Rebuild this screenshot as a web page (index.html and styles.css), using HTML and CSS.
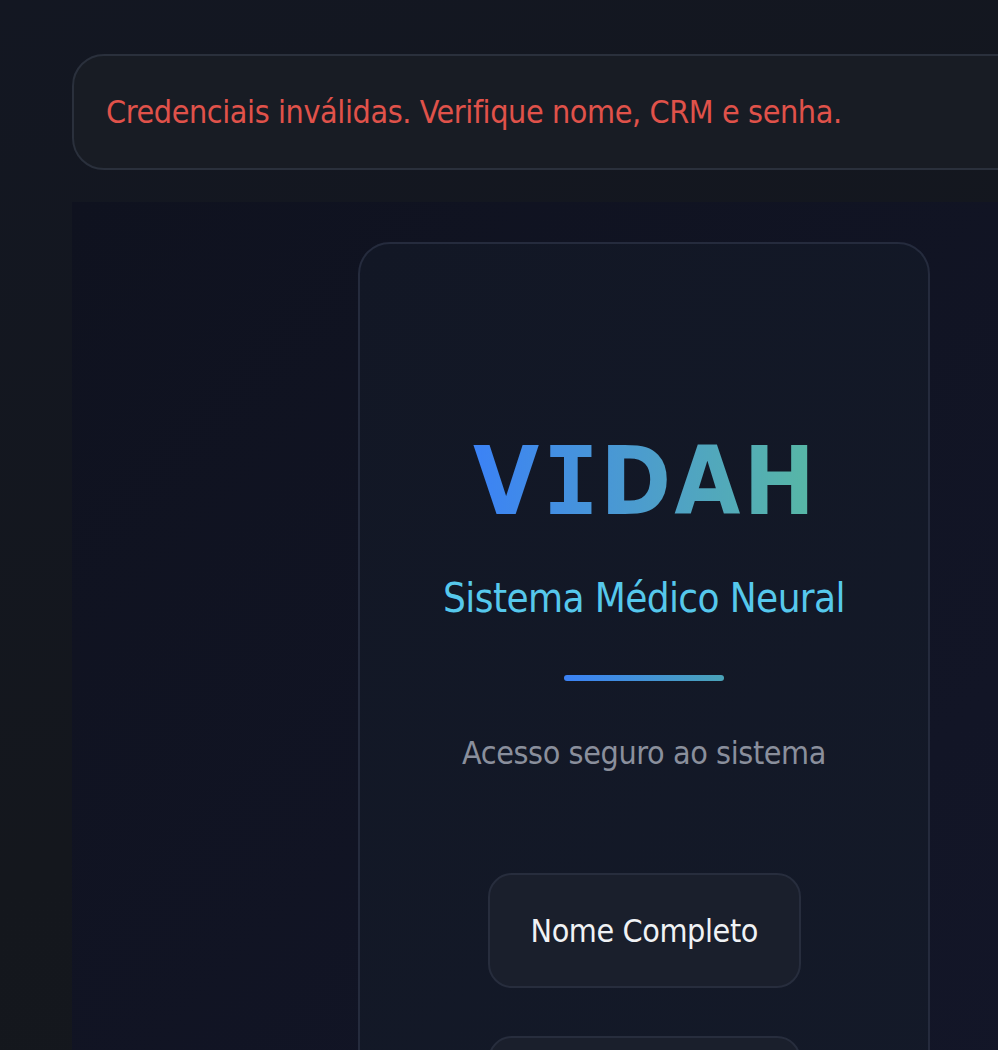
FILE: index.html
```html
<!DOCTYPE html>
<html lang="pt-BR">
<head>
<meta charset="utf-8">
<title>VIDAH — Acesso</title>
<link rel="stylesheet" href="styles.css">
</head>
<body>
  <div class="page">
    <div class="alert">Credenciais inválidas. Verifique nome, CRM e senha.</div>
    <main class="stage">
      <section class="card">
        <h1 class="logo">V<span class="logo-i">I</span>DAH</h1>
        <p class="tagline">Sistema Médico Neural</p>
        <div class="rule"></div>
        <p class="note">Acesso seguro ao sistema</p>
        <form class="form">
          <input class="field" type="text" placeholder="Nome Completo">
          <input class="field" type="text" placeholder="CRM">
          <input class="field" type="password" placeholder="Senha">
        </form>
      </section>
    </main>
  </div>
</body>
</html>
```
FILE: styles.css
```css
html {
  overflow: hidden;
}
body {
  margin: 0;
  min-height: 1050px;
  background: linear-gradient(160deg, #131722 0%, #14171d 50%, #15181e 100%);
  font-family: "DejaVu Sans", "Liberation Sans", sans-serif;
  font-stretch: condensed;
  color: #e6e8ec;
}
.page {
  width: 1144px;
  padding: 54px 0 0 72px;
}
.alert {
  border: 2px solid #2a303c;
  border-radius: 32px;
  background: #181c24;
  color: #e0524a;
  font-size: 32px;
  line-height: 48px;
  letter-spacing: -0.4px;
  padding: 32px 32px;
}
.stage {
  margin-top: 32px;
  padding-top: 40px;
  min-height: 900px;
  background: linear-gradient(135deg, #0f121f 0%, #121526 60%, #14172a 100%);
  display: flex;
  justify-content: center;
}
.card {
  width: 568px;
  border: 2px solid #252b3d;
  border-radius: 32px;
  background: linear-gradient(135deg, #121725 0%, #141a29 100%);
  display: flex;
  flex-direction: column;
  align-items: center;
  padding: 181px 0 80px;
  min-height: 900px;
}
.logo {
  margin: 0 0 0 3px;
  font-family: "DejaVu Sans", sans-serif;
  font-stretch: condensed;
  font-weight: bold;
  font-size: 95px;
  line-height: 112px;
  letter-spacing: 3px;
  background: linear-gradient(90deg, #3b82f6 0%, #4ea0c8 55%, #58b8a4 100%);
  -webkit-background-clip: text;
  background-clip: text;
  color: transparent;
}
.logo-i {
  font-family: "DejaVu Sans Mono", monospace;
  font-stretch: normal;
  letter-spacing: 1px;
}
.tagline {
  margin: 33px 0 0;
  font-size: 40px;
  line-height: 56px;
  letter-spacing: -0.6px;
  color: #56c8ec;
}
.rule {
  margin-top: 49px;
  width: 160px;
  height: 6px;
  border-radius: 3px;
  background: linear-gradient(90deg, #3b82f6, #4aa3b8);
}
.note {
  margin: 48px 0 0;
  font-size: 32px;
  line-height: 48px;
  letter-spacing: -0.4px;
  color: #8a8f9c;
}
.form {
  margin-top: 96px;
  display: flex;
  flex-direction: column;
  align-items: center;
  gap: 48px;
}
.field {
  box-sizing: border-box;
  width: 313px;
  height: 115px;
  border: 2px solid #272d3d;
  border-radius: 24px;
  background: #1a1f2c;
  padding: 0 16px 0 41px;
  font-family: inherit;
  font-stretch: condensed;
  font-size: 32px;
  letter-spacing: -0.4px;
  color: #f0f2f5;
  outline: none;
}
.field::placeholder {
  color: #f0f2f5;
  opacity: 1;
}
```
